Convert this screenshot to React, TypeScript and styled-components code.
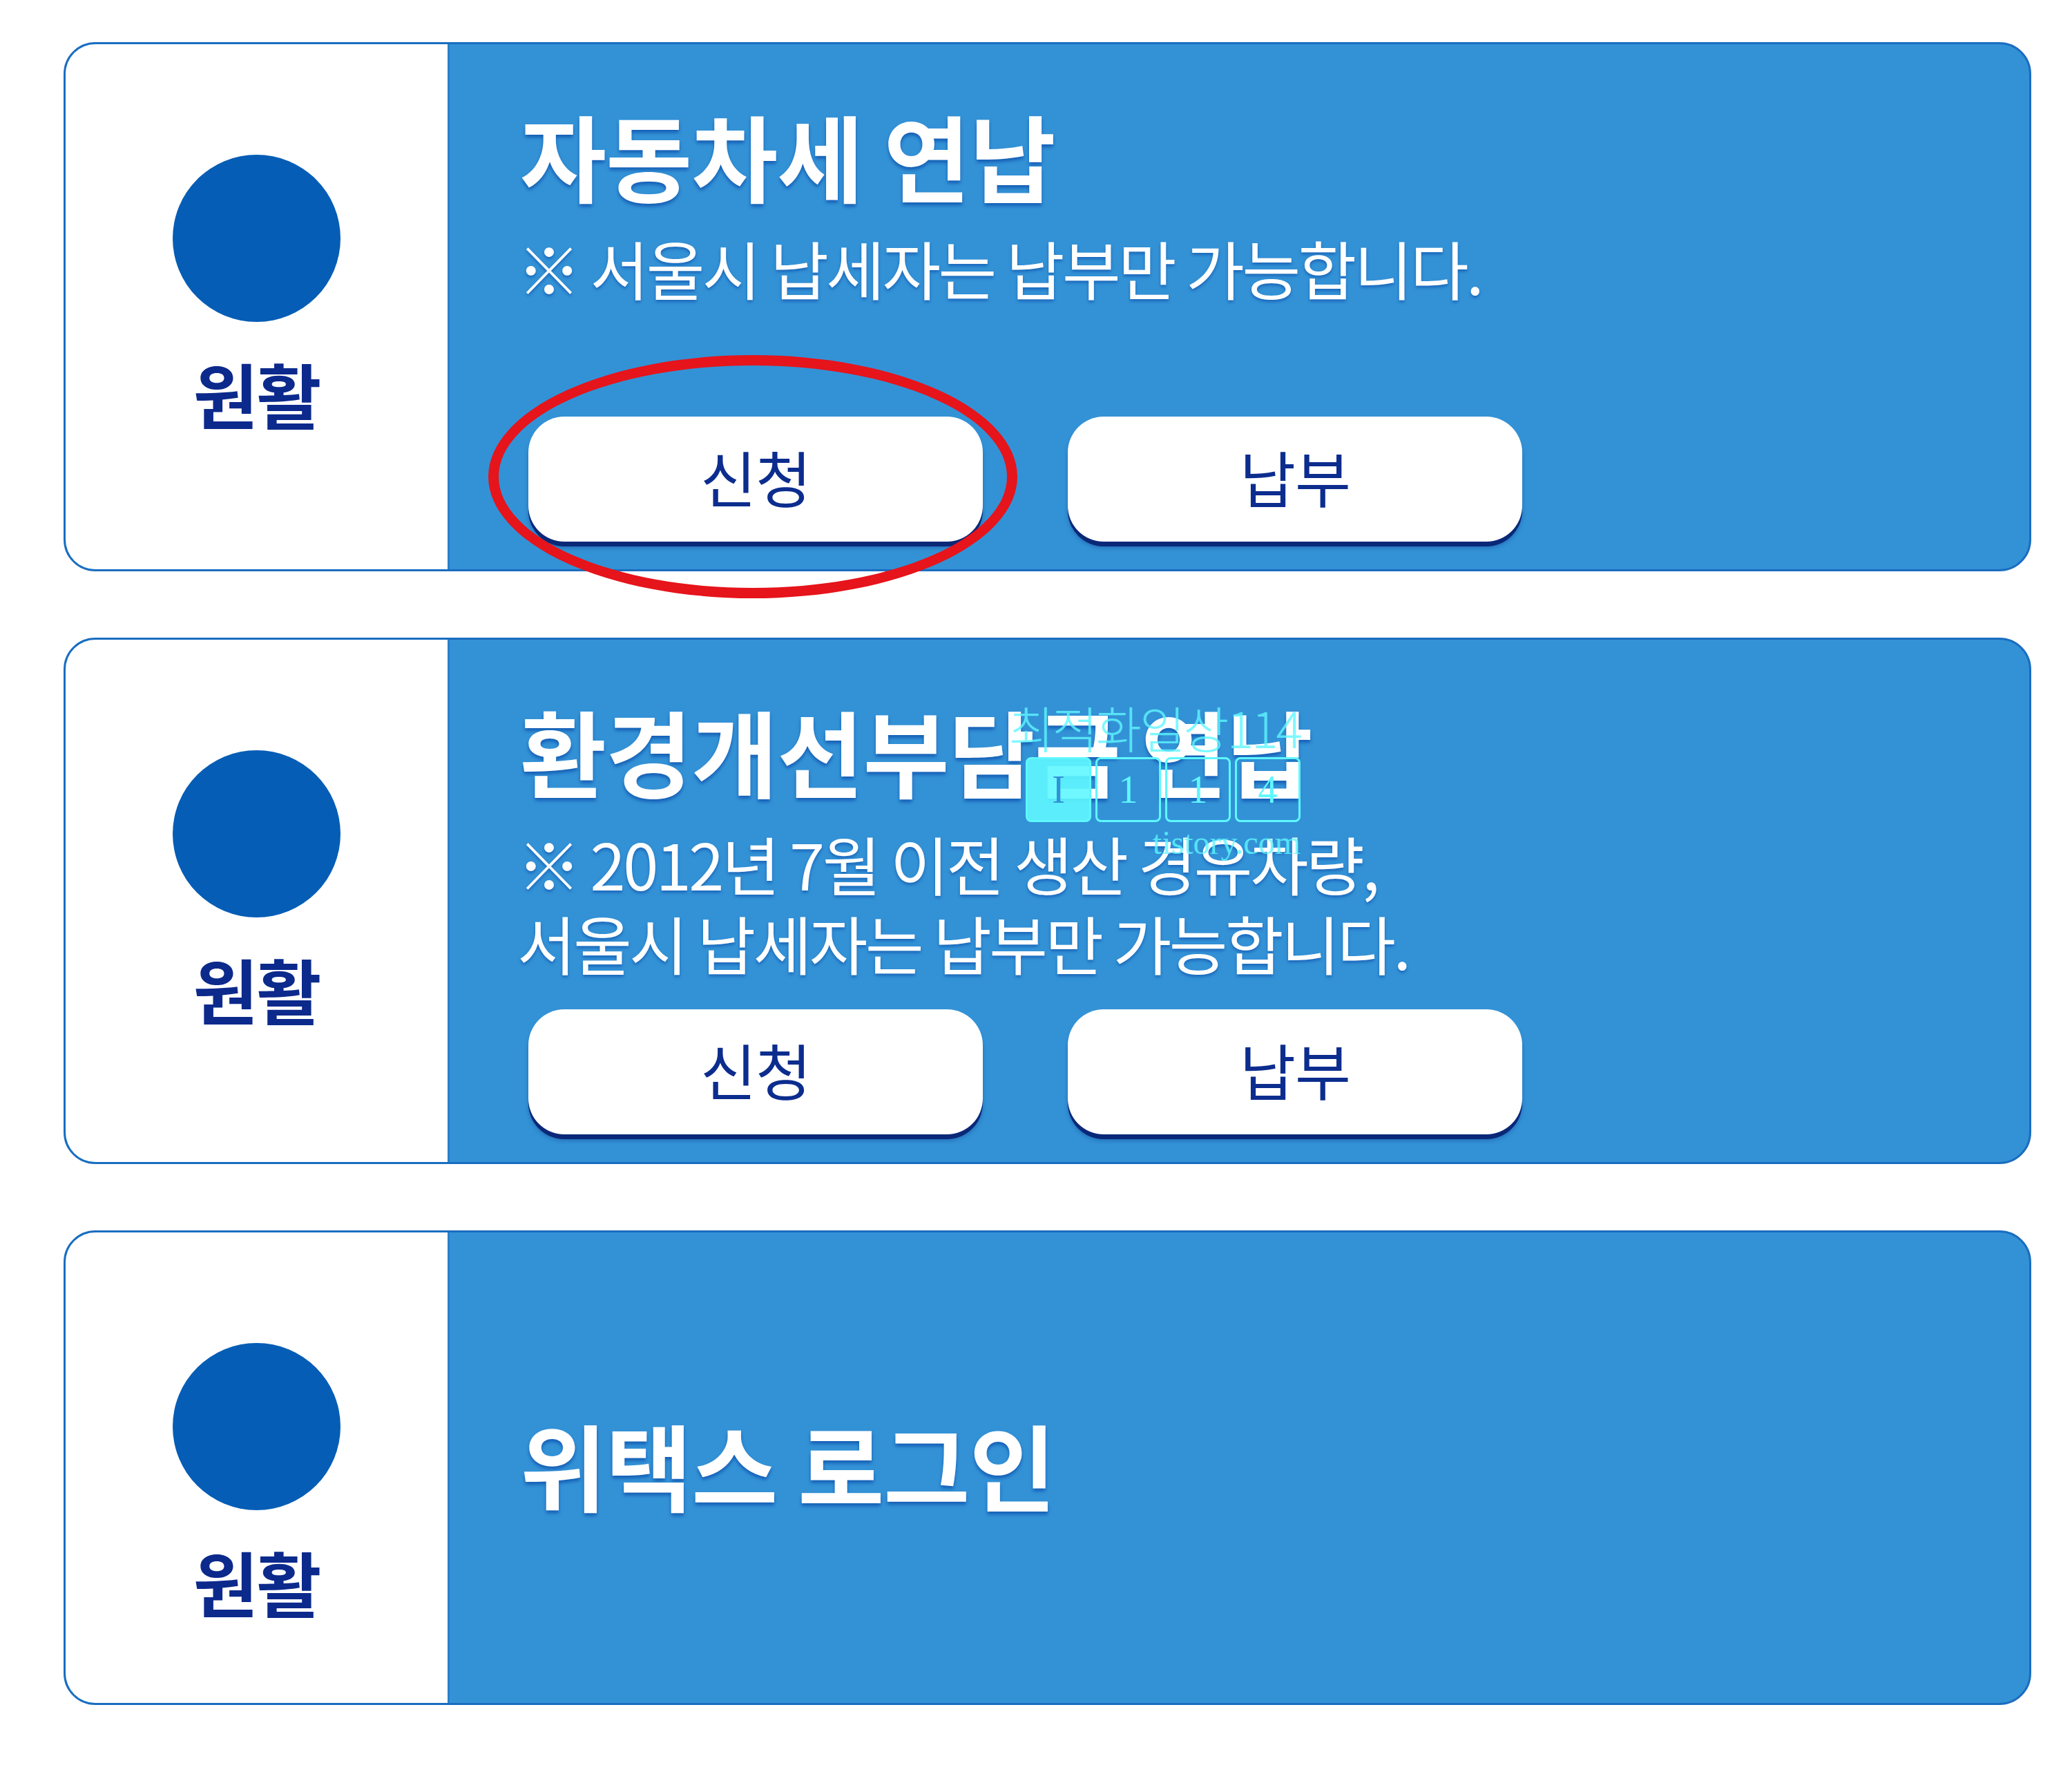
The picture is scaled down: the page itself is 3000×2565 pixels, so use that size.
import React from "react";
import styled, { createGlobalStyle } from "styled-components";

const GlobalStyle = createGlobalStyle`
  html, body {
    margin: 0;
    padding: 0;
    background: #ffffff;
  }
  body {
    font-family: "Noto Sans CJK KR", "Noto Sans", sans-serif;
  }
`;

const Page = styled.div`
  display: flex;
  flex-direction: column;
  gap: 96px;
  width: 2849px;
  padding: 61px 0 97px 92px;
`;

const Card = styled.section<{ $height: number }>`
  position: relative;
  display: flex;
  box-sizing: border-box;
  height: ${(p) => p.$height}px;
  border: 3px solid #1a6dc0;
  border-radius: 46px;
  background: #3392d6;
`;

const Side = styled.div`
  box-sizing: border-box;
  width: 556px;
  flex: none;
  display: flex;
  flex-direction: column;
  align-items: center;
  padding-top: 160px;
  background: #ffffff;
  border-right: 3px solid #2a7ec8;
  border-radius: 43px 0 0 43px;
`;

const Dot = styled.div`
  width: 243px;
  height: 242px;
  border-radius: 50%;
  background: #055db5;
`;

const Status = styled.div`
  margin-top: 42px;
  font-size: 102px;
  line-height: 1.2;
  font-weight: 700;
  letter-spacing: -2px;
  color: #0c2a8c;
`;

const Main = styled.div<{ $centered?: boolean }>`
  flex: 1;
  display: flex;
  flex-direction: column;
  justify-content: ${(p) => (p.$centered ? "center" : "flex-start")};
  padding: ${(p) => (p.$centered ? "0 0 12px 102px" : "78px 0 40px 102px")};
`;

const Title = styled.h2`
  margin: 0;
  font-size: 136px;
  line-height: 1.2;
  font-weight: 700;
  letter-spacing: -1px;
  color: #ffffff;
  text-shadow: 0 4px 5px rgba(0, 60, 160, 0.6);
`;

const Note = styled.p`
  margin: 24px 0 0 -4px;
  font-size: 92px;
  line-height: 1.25;
  font-weight: 400;
  letter-spacing: -3.5px;
  color: #ffffff;
  text-shadow: 0 3px 4px rgba(0, 60, 160, 0.5);
`;

const ButtonRow = styled.div`
  display: flex;
  gap: 123px;
  margin-top: auto;
  padding-left: 12px;
`;

const PillButton = styled.button`
  box-sizing: border-box;
  width: 658px;
  height: 181px;
  border: none;
  border-radius: 52px;
  background: #ffffff;
  box-shadow: 0 7px 0 #0a2878, 0 9px 6px rgba(10, 40, 120, 0.35);
  font-family: "Noto Sans CJK KR", "Noto Sans", sans-serif;
  font-size: 88px;
  line-height: 1;
  font-weight: 400;
  letter-spacing: -1px;
  color: #0c2d8e;
  padding: 0 0 10px;
  cursor: pointer;
`;

const Highlight = styled.div`
  position: absolute;
  left: 612px;
  top: 450px;
  width: 766px;
  height: 352px;
  box-sizing: border-box;
  border: 15px solid #e6141b;
  border-radius: 50%;
  pointer-events: none;
`;

const Watermark = styled.div`
  position: absolute;
  left: 1338px;
  top: 90px;
  width: 450px;
  display: flex;
  flex-direction: column;
  align-items: flex-end;
  color: #5ff7ff;
  pointer-events: none;
`;

const MarkText = styled.div`
  font-family: "Noto Sans CJK KR", serif;
  font-size: 72px;
  line-height: 1;
  font-weight: 300;
  letter-spacing: -3px;
  opacity: 0.8;
`;

const MarkBoxes = styled.div`
  display: flex;
  gap: 6px;
  margin-top: 8px;
`;

const MarkBox = styled.div<{ $filled?: boolean }>`
  box-sizing: border-box;
  width: 95px;
  height: 94px;
  border: 3px solid #5ff7ff;
  border-radius: 8px;
  background: ${(p) => (p.$filled ? "rgba(95, 247, 255, 0.9)" : "transparent")};
  color: ${(p) => (p.$filled ? "#3392d6" : "#5ff7ff")};
  display: flex;
  align-items: center;
  justify-content: center;
  font-family: "Liberation Serif", serif;
  font-size: 56px;
  line-height: 1;
`;

const MarkSite = styled.div`
  margin-top: 6px;
  font-family: "Liberation Serif", serif;
  font-size: 48px;
  line-height: 1;
  opacity: 0.8;
`;

type Item = {
  title: string;
  notes: string[];
  buttons: boolean;
  height: number;
  highlight?: boolean;
  watermark?: boolean;
};

const items: Item[] = [
  {
    title: "자동차세 연납",
    notes: ["※ 서울시 납세자는 납부만 가능합니다."],
    buttons: true,
    height: 766,
    highlight: true,
  },
  {
    title: "환경개선부담금 연납",
    notes: ["※ 2012년 7월 이전 생산 경유차량,", "서울시 납세자는 납부만 가능합니다."],
    buttons: true,
    height: 762,
    watermark: true,
  },
  {
    title: "위택스 로그인",
    notes: [],
    buttons: false,
    height: 687,
  },
];

export default function App() {
  return (
    <>
      <GlobalStyle />
      <Page>
        {items.map((item) => (
          <Card key={item.title} $height={item.height}>
            <Side>
              <Dot />
              <Status>원활</Status>
            </Side>
            <Main $centered={!item.buttons}>
              <Title>{item.title}</Title>
              {item.notes.length > 0 && (
                <Note>
                  {item.notes.map((n, i) => (
                    <React.Fragment key={n}>
                      {i > 0 && <br />}
                      {n}
                    </React.Fragment>
                  ))}
                </Note>
              )}
              {item.buttons && (
                <ButtonRow>
                  <PillButton>신청</PillButton>
                  <PillButton>납부</PillButton>
                </ButtonRow>
              )}
            </Main>
            {item.highlight && <Highlight />}
            {item.watermark && (
              <Watermark>
                <MarkText>최적화일상114</MarkText>
                <MarkBoxes>
                  <MarkBox $filled>I</MarkBox>
                  <MarkBox>1</MarkBox>
                  <MarkBox>1</MarkBox>
                  <MarkBox>4</MarkBox>
                </MarkBoxes>
                <MarkSite>tistory.com</MarkSite>
              </Watermark>
            )}
          </Card>
        ))}
      </Page>
    </>
  );
}
